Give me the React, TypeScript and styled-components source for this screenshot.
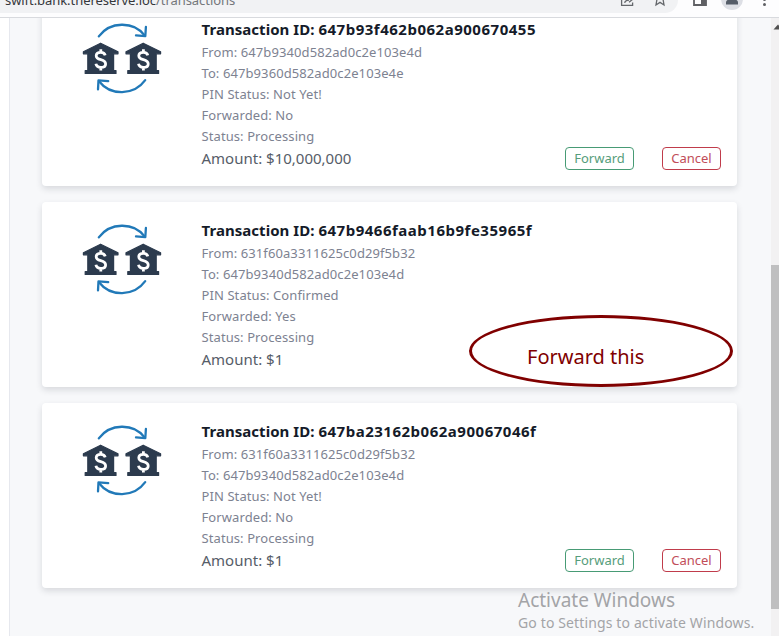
import React from "react";
import styled, { createGlobalStyle } from "styled-components";

const GlobalStyle = createGlobalStyle`
  * { box-sizing: border-box; }
  body { margin: 0; overflow: hidden; font-family: "Noto Sans", "Open Sans", sans-serif; }
`;

const Window = styled.div`
  position: relative;
  display: flex;
  flex-direction: column;
  width: 779px;
  height: 636px;
  overflow: hidden;
  background: #fff;
`;

const BrowserBar = styled.header`
  flex: none;
  display: flex;
  align-items: flex-start;
  height: 18px;
  background: #fdfdfe;
  border-bottom: 1px solid #d8dade;
  overflow: hidden;
`;

const AddressBar = styled.div`
  display: flex;
  justify-content: space-between;
  width: 678px;
  height: 13px;
  padding: 0 10px 0 5px;
  background: #f1f2f4;
  border-bottom-right-radius: 13px;
`;

const Url = styled.span`
  margin-top: -9px;
  font-size: 13px;
  line-height: 18px;
  height: 18px;
  letter-spacing: -0.06px;
  color: #74777b;
  white-space: nowrap;
`;

const Host = styled.span`
  color: #35373b;
`;

const AddressIcons = styled.svg`
  width: 50px;
  height: 13px;
`;

const BrowserIcons = styled.svg`
  width: 101px;
  height: 17px;
`;

const Viewport = styled.div`
  flex: 1;
  display: flex;
  min-height: 0;
`;

const PageMargin = styled.div`
  flex: none;
  width: 10px;
  background: #fff;
  border-right: 1px solid #e6e8ee;
`;

const Page = styled.main`
  flex: 1;
  display: flex;
  flex-direction: column;
  gap: 16px;
  margin-top: -17px;
  padding: 0 34px 0 32px;
  background: #f7f8fa;
  clip-path: inset(17px 0 0 0);
`;

const Card = styled.article`
  flex: none;
  display: flex;
  height: 185px;
  padding: 16px 16px 16px 40px;
  background: #fff;
  border-radius: 4px;
  box-shadow: 0 3px 6px rgba(40, 44, 60, 0.15);
`;

const TransferIcon = styled.svg`
  flex: none;
  width: 80px;
  height: 72px;
  margin: 5px 39.5px 0 0;
`;

const Details = styled.div`
  flex: 1;
  display: flex;
  flex-direction: column;
  white-space: nowrap;
`;

const Title = styled.h2`
  margin: 0 0 1px;
  font-size: 15px;
  font-weight: 700;
  line-height: 24px;
  letter-spacing: 0.04px;
  color: #151b29;
`;

const TransactionId = styled.span`
  letter-spacing: 0.51px;
`;

const Field = styled.div`
  font-size: 13px;
  line-height: 21px;
  letter-spacing: 0.09px;
  color: #7d8291;
`;

const Amount = styled.div`
  font-size: 15px;
  line-height: 22px;
  color: #565d68;
`;

const Actions = styled.div`
  align-self: flex-end;
  display: flex;
  gap: 28px;
`;

const ActionButton = styled.button<{ $tone: "forward" | "cancel" }>`
  width: ${(p) => (p.$tone === "forward" ? 69 : 59)}px;
  height: 23px;
  padding: 0;
  border: 1px solid ${(p) => (p.$tone === "forward" ? "#479b75" : "#c03c4b")};
  border-radius: 4px;
  background: #fff;
  color: ${(p) => (p.$tone === "forward" ? "#569d7b" : "#c14d59")};
  font-family: inherit;
  font-size: 13px;
  line-height: 21px;
`;

const Scrollbar = styled.div`
  flex: none;
  display: flex;
  flex-direction: column;
  width: 8px;
  background: #f2f1f2;
`;

const ScrollArrow = styled.svg`
  width: 8px;
  height: 17px;
`;

const ScrollThumb = styled.div`
  height: 344px;
  margin-top: 230px;
  background: #bfbfc0;
`;

const Annotation = styled.div`
  position: absolute;
  left: 469px;
  top: 314.5px;
  display: flex;
  width: 264px;
  height: 72px;
  border: 3px solid #800000;
  border-radius: 50%;
  padding: 25px 0 0 55px;
  color: #800000;
  font-size: 20px;
  line-height: 28px;
  white-space: nowrap;
`;

const Watermark = styled.div`
  position: absolute;
  left: 518px;
  top: 588px;
  color: #a3a4a7;
  white-space: nowrap;
`;

const WatermarkTitle = styled.div`
  font-size: 19px;
  line-height: 25px;
`;

const WatermarkText = styled.div`
  font-size: 14px;
  line-height: 20px;
  letter-spacing: 0.13px;
`;

interface Transaction {
  id: string;
  from: string;
  to: string;
  pin: string;
  forwarded: string;
  amount: string;
}

const transactions: Transaction[] = [
  { id: "647b93f462b062a900670455", from: "647b9340d582ad0c2e103e4d", to: "647b9360d582ad0c2e103e4e", pin: "Not Yet!", forwarded: "No", amount: "$10,000,000" },
  { id: "647b9466faab16b9fe35965f", from: "631f60a3311625c0d29f5b32", to: "647b9340d582ad0c2e103e4d", pin: "Confirmed", forwarded: "Yes", amount: "$1" },
  { id: "647ba23162b062a90067046f", from: "631f60a3311625c0d29f5b32", to: "647b9340d582ad0c2e103e4d", pin: "Not Yet!", forwarded: "No", amount: "$1" },
];

const Bank = ({ x }: { x: number }) => (
  <g transform={`translate(${x} 0)`}>
    <path
      d="M100.6 43.2 L118 51.8 V53.8 H113.6 V70.6 H116 V73.4 H85.2 V70.6 H87.8 V53.8 H83.4 V51.8 Z"
      fill="#2c3b4e"
      stroke="#2c3b4e"
      strokeWidth="1.2"
      strokeLinejoin="round"
    />
    <path
      d="M105.2 55.4 C104.6 53.1 103 52.3 100.8 52.3 C98 52.3 96.2 53.5 96.2 55.8 C96.2 58.1 98 59 100.8 59.7 C103.9 60.5 105.6 61.5 105.6 63.9 C105.6 66.3 103.7 67.4 100.8 67.4 C98 67.4 96.4 66.4 95.9 63.8 M100.8 49.2 V52.6 M100.8 67 V70.4"
      fill="none"
      stroke="#fff"
      strokeWidth="2.8"
    />
  </g>
);

const BankTransfer = () => (
  <TransferIcon viewBox="82 22 80 72">
    <g fill="none" stroke="#2179b8" strokeWidth="2.3" strokeLinecap="round" strokeLinejoin="round">
      <path d="M98.8 36.4 C110 21.2 133.5 20.8 144.8 35.6" />
      <path d="M145.9 27 L145.3 36.2 L136 35.4" />
      <path d="M145.2 80.2 C134 95.8 110.4 96 99 81.2" />
      <path d="M98 89.4 L98.5 80.4 L108.2 81.2" />
    </g>
    <Bank x={0} />
    <Bank x={42.6} />
  </TransferIcon>
);

export default function App() {
  return (
    <Window>
      <GlobalStyle />
      <BrowserBar>
        <AddressBar>
          <Url>
            <Host>swift.bank.thereserve.loc</Host>/transactions
          </Url>
          <AddressIcons viewBox="618 0 50 13" fill="none" stroke="#65686c" strokeWidth="1.3">
            <path d="M621.6 0 V5.4 H632.6 V2.5 M624.5 2.8 C625.4 0.8 627 0 629 0 M629 2.3 L633 -1" />
            <path d="M657 -1 L656 5 L660 2.4 L664 5 L663 -1" />
          </AddressIcons>
        </AddressBar>
        <BrowserIcons viewBox="678 0 101 17">
          <path d="M694 -3 H706 V5 H694 Z" fill="none" stroke="#5f6064" strokeWidth="1.8" />
          <path d="M701 -3 H706 V5 H701 Z" fill="#5f6064" />
          <circle cx="732" cy="-1" r="11" fill="#dddfe5" />
          <path d="M726 4.5 V2.5 C726 0 729 -1 732 -1 S738 0 738 2.5 V4.5 Z" fill="#555d68" />
          <circle cx="764.5" cy="4.5" r="1.5" fill="#5f6064" />
          <circle cx="764.5" cy="-0.5" r="1.5" fill="#5f6064" />
        </BrowserIcons>
      </BrowserBar>
      <Viewport>
        <PageMargin />
        <Page>
          {transactions.map((t) => (
            <Card key={t.id}>
              <BankTransfer />
              <Details>
                <Title>
                  Transaction ID: <TransactionId>{t.id}</TransactionId>
                </Title>
                <Field>From: {t.from}</Field>
                <Field>To: {t.to}</Field>
                <Field>PIN Status: {t.pin}</Field>
                <Field>Forwarded: {t.forwarded}</Field>
                <Field>Status: Processing</Field>
                <Amount>Amount: {t.amount}</Amount>
              </Details>
              {t.forwarded === "No" && (
                <Actions>
                  <ActionButton $tone="forward">Forward</ActionButton>
                  <ActionButton $tone="cancel">Cancel</ActionButton>
                </Actions>
              )}
            </Card>
          ))}
        </Page>
        <Scrollbar>
          <ScrollArrow viewBox="771 18 8 17">
            <path d="M773.5 29.5 L778 24.5 L782.5 29.5 Z" fill="#505050" />
          </ScrollArrow>
          <ScrollThumb />
        </Scrollbar>
      </Viewport>
      <Annotation>Forward this</Annotation>
      <Watermark>
        <WatermarkTitle>Activate Windows</WatermarkTitle>
        <WatermarkText>Go to Settings to activate Windows.</WatermarkText>
      </Watermark>
    </Window>
  );
}
